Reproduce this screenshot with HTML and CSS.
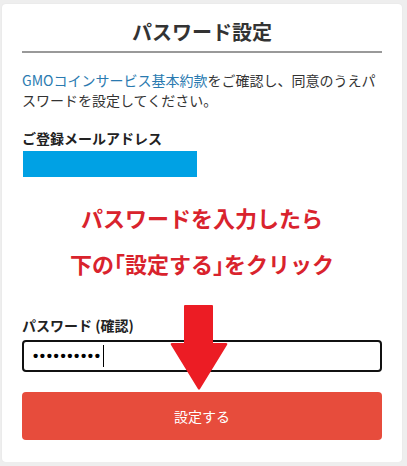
FILE: index.html
```html
<!DOCTYPE html>
<html lang="ja">
<head>
<meta charset="utf-8">
<title>パスワード設定</title>
<link rel="stylesheet" href="styles.css">
</head>
<body>
<div class="card">
  <h1 class="title">パスワード設定</h1>
  <p class="lead"><a class="link" href="#">GMOコインサービス基本約款</a>をご確認し、同意のうえパスワードを設定してください。</p>
  <div class="label">ご登録メールアドレス</div>
  <div class="email-mask"></div>
  <div class="note">
    <div>パスワードを入力したら</div>
    <div>下の<span class="bracket">「</span>設定する<span class="bracket">」</span>をクリック</div>
  </div>
  <div class="label label-pw">パスワード (確認)</div>
  <div class="input"><span class="dots">••••••••••</span><span class="caret"></span></div>
  <button class="submit">設定する</button>
  <svg class="arrow" width="60" height="90" viewBox="0 0 60 90">
    <path d="M14 2 Q14 1 15 1 L42 1 Q43 1 43 2 L43 39 L56 39 Q58 39 57 41 L30 85 Q29 86.5 28 85 L1 41 Q0 39 2 39 L14 39 Z" fill="#ec1c24"/>
  </svg>
</div>
</body>
</html>
```

FILE: styles.css
```css
html, body {
  margin: 0;
  padding: 0;
}
body {
  background: #eeeeee;
  font-family: "Noto Sans CJK JP", "Noto Sans", sans-serif;
  color: #333333;
  padding: 4px 5px 0 2px;
}
.card {
  position: relative;
  background: #ffffff;
  border-radius: 4px;
  box-shadow: 0 0 2px rgba(0,0,0,0.06);
  padding: 14px 20px 22px 20px;
  width: 360px;
}
.title {
  margin: 0;
  font-size: 20px;
  line-height: 28px;
  font-weight: 700;
  text-align: center;
  color: #333333;
  padding-bottom: 5px;
  border-bottom: 2px solid #999999;
}
.lead {
  margin: 17px 0 0 0;
  font-size: 14px;
  line-height: 20px;
  color: #333333;
}
.link {
  color: #2a7ab0;
  text-decoration: none;
}
.label {
  margin-top: 18px;
  font-size: 14px;
  line-height: 20px;
  font-weight: 700;
  color: #222222;
}
.email-mask {
  margin-top: 3px;
  margin-left: 1px;
  width: 174px;
  height: 26px;
  background: #00a1e4;
}
.note {
  margin-top: 17px;
  text-align: center;
  color: #d9232d;
  font-size: 22px;
  line-height: 46px;
  font-weight: 700;
}
.bracket {
  font-feature-settings: "halt";
}
.label-pw {
  margin-top: 29px;
}
.input {
  margin-top: 5px;
  height: 32px;
  box-sizing: border-box;
  border: 2px solid #111111;
  border-radius: 4px;
  display: flex;
  align-items: center;
  padding-left: 9px;
}
.dots {
  font-family: "Liberation Sans", sans-serif;
  font-size: 15px;
  font-weight: 700;
  letter-spacing: 1.6px;
  color: #000000;
  line-height: 20px;
}
.caret {
  width: 1px;
  height: 22px;
  background: #000000;
  margin-left: 1px;
}
.submit {
  display: block;
  margin-top: 20px;
  width: 100%;
  height: 48px;
  border: none;
  border-radius: 4px;
  background: #e74c3c;
  color: #ffffff;
  font-family: "Noto Sans CJK JP", sans-serif;
  font-size: 14px;
}
.arrow {
  position: absolute;
  left: 168px;
  top: 300px;
}
```
